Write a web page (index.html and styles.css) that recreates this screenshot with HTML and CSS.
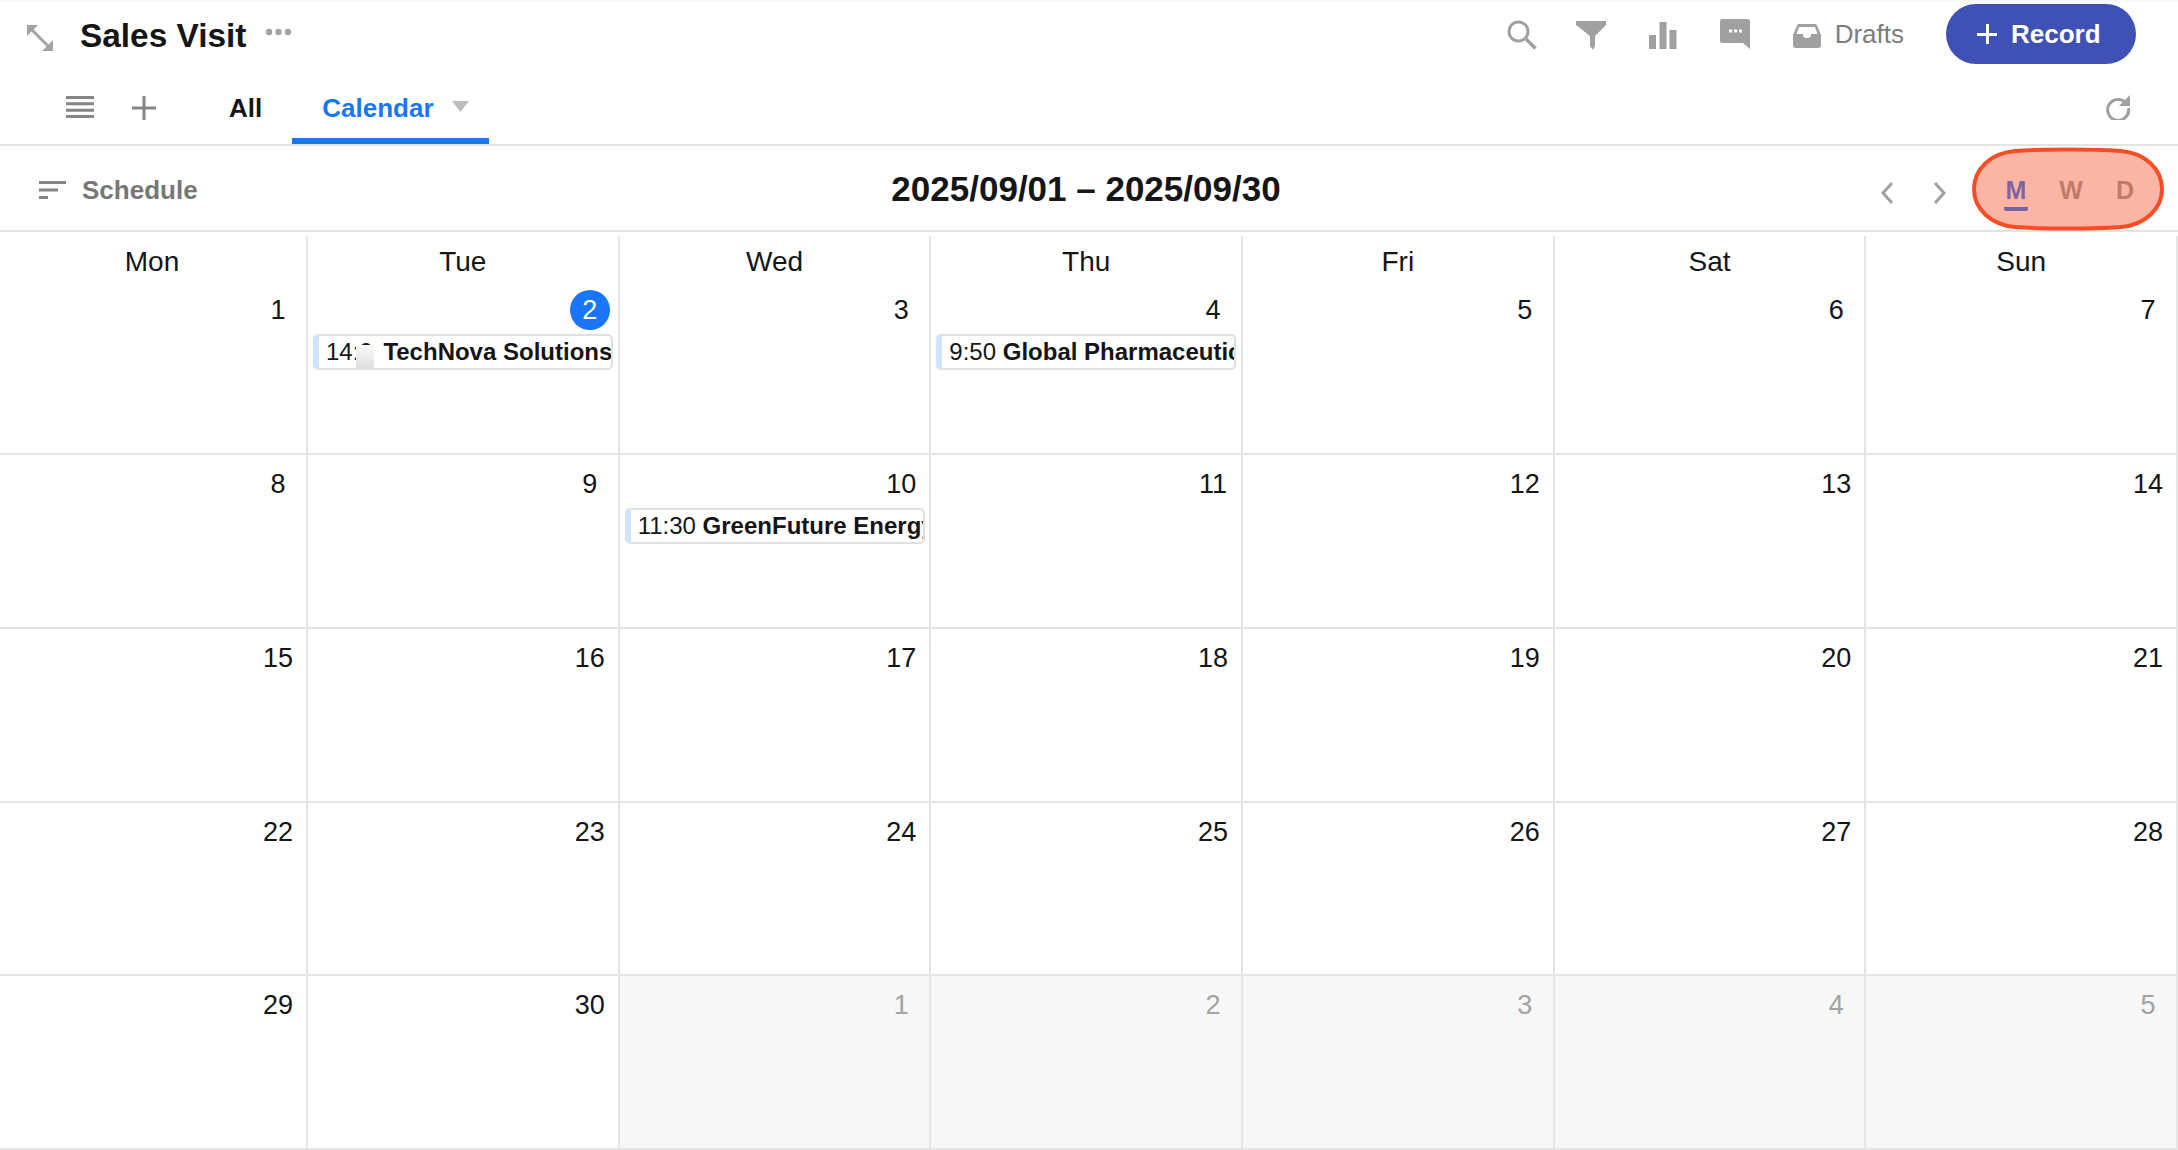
FILE: index.html
```html
<!DOCTYPE html>
<html lang="en">
<head>
<meta charset="utf-8">
<title>Sales Visit</title>
<link rel="stylesheet" href="styles.css">
</head>
<body>
<div class="app">
  <header class="topbar">
    <svg class="ic-expand" width="26" height="26" viewBox="0 0 26 26"><path d="M0 0h11L0 11zM26 26H15l11-11z" fill="#a3a3a3"/><path d="M4 4l18 18" stroke="#a3a3a3" stroke-width="3"/></svg>
    <h1 class="title">Sales Visit</h1>
    <svg class="ic-dots" width="27" height="8" viewBox="0 0 27 8"><circle cx="4" cy="4" r="3.2" fill="#a3a3a3"/><circle cx="13.5" cy="4" r="3.2" fill="#a3a3a3"/><circle cx="23" cy="4" r="3.2" fill="#a3a3a3"/></svg>
    <div class="top-actions">
      <svg class="ic-search" width="30" height="30" viewBox="0 0 30 30"><circle cx="11.5" cy="11.5" r="9.5" fill="none" stroke="#a0a0a0" stroke-width="3"/><path d="M18.5 18.5L28.5 28.5" stroke="#a0a0a0" stroke-width="3.4"/></svg>
      <svg class="ic-funnel" width="32" height="29" viewBox="0 0 32 29"><path d="M1 0h30v4L20 15v10l-2 4-3-4V15L1 4z" fill="#a0a0a0"/></svg>
      <svg class="ic-bars" width="28" height="27" viewBox="0 0 28 27"><path d="M0 13h7v14H0zM10.500 0h7v27h-7zM20.500 8h7v19h-7z" fill="#a0a0a0"/></svg>
      <svg class="ic-chat" width="30" height="30" viewBox="0 0 30 30"><path d="M2 0h26a2 2 0 0 1 2 2v28l-7-6H2a2 2 0 0 1-2-2V2a2 2 0 0 1 2-2z" fill="#a0a0a0"/><path d="M9 10.500h3v3H9zM14 10.500h3v3h-3zM19 10.500h3v3h-3z" fill="#fff"/></svg>
      <svg class="ic-inbox" width="28" height="24" viewBox="0 0 28 24"><path d="M6 0h16a2 2 0 0 1 2 1.500L28 11v10a3 3 0 0 1-3 3H3a3 3 0 0 1-3-3V11l4-9.500A2 2 0 0 1 6 0z" fill="#a0a0a0"/><path d="M6 3h16l2.500 7H18v2l-2 2h-4l-2-2v-2H3.500z" fill="#fff"/></svg>
      <span class="drafts">Drafts</span>
      <button class="record"><span class="record-plus"></span>Record</button>
    </div>
  </header>

  <nav class="tabs">
    <svg class="ic-list" width="28" height="22" viewBox="0 0 28 22"><path d="M0 0h28v3H0zM0 6.300h28v3H0zM0 12.700h28v3H0zM0 19h28v3H0z" fill="#858585"/></svg>
    <svg class="ic-plus" width="24" height="24" viewBox="0 0 24 24"><path d="M10.500 0h3v24h-3zM0 10.500h24v3H0z" fill="#858585"/></svg>
    <span class="tab-all">All</span>
    <div class="tab-cal">
      <span class="tab-cal-label">Calendar</span>
      <svg class="ic-caret" width="17" height="11" viewBox="0 0 17 11"><path d="M0 0h17l-8.500 11z" fill="#bdbdbd"/></svg>
    </div>
    <svg class="ic-refresh" width="26" height="26" viewBox="0 0 26 26"><path d="M21.500 9.500A10.500 10.500 0 1 0 23.500 14" fill="none" stroke="#a0a0a0" stroke-width="3"/><path d="M25 1v11H14z" fill="#a0a0a0"/></svg>
  </nav>

  <section class="toolbar">
    <div class="schedule">
      <svg width="27" height="18" viewBox="0 0 27 18"><path d="M0 0h27v3H0zM0 7.500h19v3H0zM0 15h9v3H0z" fill="#858585"/></svg>
      <span>Schedule</span>
    </div>
    <div class="range">2025/09/01 – 2025/09/30</div>
    <div class="nav-btns">
      <svg width="14" height="24" viewBox="0 0 14 24"><path d="M12 2L3 12l9 10" fill="none" stroke="#a0a0a0" stroke-width="3"/></svg>
      <svg width="14" height="24" viewBox="0 0 14 24"><path d="M2 2l9 10-9 10" fill="none" stroke="#a0a0a0" stroke-width="3"/></svg>
    </div>
    <div class="modes">
      <span class="mode active">M</span>
      <span class="mode">W</span>
      <span class="mode">D</span>
    </div>
    <svg class="highlight" width="194" height="84" viewBox="0 0 194 84"><path d="M44 4C72 2 122 2 150 4C174 6 191 22 191 42C191 62 174 78 150 80C122 82 72 82 44 80C20 78 3 62 3 42C3 22 20 6 44 4z" fill="rgba(247,78,40,.418)" stroke="#f54e26" stroke-width="4"/></svg>
  </section>

  <div class="weekdays">
    <div>Mon</div><div>Tue</div><div>Wed</div><div>Thu</div><div>Fri</div><div>Sat</div><div>Sun</div>
  </div>
  <div class="month">
    <div class="cell first"><span class="num">1</span></div>
    <div class="cell first"><span class="num today">2</span>
      <div class="event"><span class="ev-time short">14:0</span> <b>TechNova Solutions</b><span class="smudge"></span></div></div>
    <div class="cell first"><span class="num">3</span></div>
    <div class="cell first"><span class="num">4</span>
      <div class="event"><span class="ev-time">9:50</span> <b>Global Pharmaceuticals</b></div></div>
    <div class="cell first"><span class="num">5</span></div>
    <div class="cell first"><span class="num">6</span></div>
    <div class="cell first"><span class="num">7</span></div>

    <div class="cell"><span class="num">8</span></div>
    <div class="cell"><span class="num">9</span></div>
    <div class="cell"><span class="num">10</span>
      <div class="event"><span class="ev-time">11:30</span> <b>GreenFuture Energy</b></div></div>
    <div class="cell"><span class="num">11</span></div>
    <div class="cell"><span class="num">12</span></div>
    <div class="cell"><span class="num">13</span></div>
    <div class="cell"><span class="num">14</span></div>

    <div class="cell"><span class="num">15</span></div>
    <div class="cell"><span class="num">16</span></div>
    <div class="cell"><span class="num">17</span></div>
    <div class="cell"><span class="num">18</span></div>
    <div class="cell"><span class="num">19</span></div>
    <div class="cell"><span class="num">20</span></div>
    <div class="cell"><span class="num">21</span></div>

    <div class="cell"><span class="num">22</span></div>
    <div class="cell"><span class="num">23</span></div>
    <div class="cell"><span class="num">24</span></div>
    <div class="cell"><span class="num">25</span></div>
    <div class="cell"><span class="num">26</span></div>
    <div class="cell"><span class="num">27</span></div>
    <div class="cell"><span class="num">28</span></div>

    <div class="cell"><span class="num">29</span></div>
    <div class="cell"><span class="num">30</span></div>
    <div class="cell off"><span class="num">1</span></div>
    <div class="cell off"><span class="num">2</span></div>
    <div class="cell off"><span class="num">3</span></div>
    <div class="cell off"><span class="num">4</span></div>
    <div class="cell off"><span class="num">5</span></div>
  </div>
</div>
</body>
</html>
```

FILE: styles.css
```css
* { box-sizing: border-box; }
html, body { margin: 0; padding: 0; background: #fff; }
body {
  font-family: "Liberation Sans", Arial, sans-serif;
  color: #151515;
  width: 2178px;
  height: 1150px;
  overflow: hidden;
}
svg { display: block; flex: none; }
.app { width: 2178px; height: 1150px; border-top: 2px solid #f7f7f7; }

/* top bar */
.topbar { height: 68px; display: flex; align-items: center; position: relative; }
.ic-expand { margin-left: 27px; margin-top: 4px; }
.title { margin: 0 0 0 27px; font-size: 33.4px; font-weight: 700; line-height: 40px; }
.ic-dots { margin-left: 19px; margin-bottom: 8px; }
.top-actions { margin-left: auto; display: flex; align-items: center; height: 60px; margin-right: 42px; margin-top: -4px; }
.ic-search { margin-right: 38px; margin-top: 2px; }
.ic-funnel { margin-right: 42px; margin-top: 2px; }
.ic-bars { margin-right: 43px; margin-top: 2px; }
.ic-chat { margin-right: 43px; }
.ic-inbox { margin-right: 14px; margin-top: 4px; }
.drafts { color: #7c7c7c; font-size: 26px; margin-right: 42px; }
.record {
  width: 190px; height: 60px; border: 0; border-radius: 30px; background: #3f51b5; color: #fff;
  font: 700 26px "Liberation Sans", Arial, sans-serif;
  display: flex; align-items: center; padding: 0 0 0 31px; gap: 14px;
}
.record-plus {
  width: 20px; height: 20px; flex: none;
  background:
    linear-gradient(#fff, #fff) center / 3px 100% no-repeat,
    linear-gradient(#fff, #fff) center / 100% 3px no-repeat;
}

/* tabs */
.tabs { height: 76px; display: flex; align-items: center; border-bottom: 2px solid #e3e3e3; position: relative; }
.ic-list { margin-left: 66px; }
.ic-plus { margin-left: 38px; margin-top: 1px; }
.tab-all { margin-left: 73px; font-size: 26px; font-weight: 700; margin-top: 2px; }
.tab-cal {
  margin-left: 30px; width: 197px; height: 74px; display: flex; align-items: center; padding-left: 30px;
  border-bottom: 6px solid #1a76f8; padding-top: 9px;
}
.tab-cal-label { color: #1a76f8; font-size: 26px; font-weight: 700; }
.ic-caret { margin-left: 18px; margin-top: -4px; }
.ic-refresh { margin-left: auto; margin-right: 47px; }

/* toolbar */
.toolbar { height: 86px; display: grid; grid-template-columns: 1fr auto 1fr; align-items: center; position: relative; border-bottom: 2px solid #e3e3e3; }
.schedule { display: flex; align-items: center; gap: 16px; padding-left: 39px; color: #777; font-size: 26px; font-weight: 700; padding-top: 4px; }
.range { font-size: 35px; font-weight: 700; margin-left: -6px; padding-top: 1px; }
.nav-btns { position: absolute; left: 1880px; top: 35px; display: flex; gap: 39px; }
.modes { position: absolute; left: 2004px; top: 23px; display: flex; height: 42px; }
.mode { color: #999; font-size: 25px; font-weight: 700; width: 24px; text-align: center; margin-right: 31px; padding-top: 7px; }
.mode:nth-child(2) { margin-right: 30px; }
.mode.active { color: #1a76f8; border-bottom: 4px solid #1a76f8; border-radius: 0 0 2px 2px; }
.highlight { position: absolute; left: 1971px; top: 1px; }

/* calendar */
.weekdays { display: grid; grid-template-columns: 308px repeat(6, 1fr); height: 46px; padding-top: 4px; }
.weekdays > div { font-size: 28px; text-align: center; padding-top: 5px; line-height: 42px; border-right: 2px solid #e5e5e5; }
.weekdays > div:first-child { padding-right: 2px; }
.month { display: grid; grid-template-columns: 308px repeat(6, 1fr); grid-template-rows: 177px repeat(4, 173.75px); }
.cell { border-right: 2px solid #e5e5e5; border-bottom: 2px solid #e5e5e5; padding: 9px 8px 0 5px; position: relative; min-width: 0; display: flex; flex-direction: column; align-items: stretch; }
.cell.first { padding-top: 12px; }
.num { align-self: flex-end; width: 40px; text-align: center; font-size: 27px; line-height: 40px; height: 40px; }
.cell.off { background: #f7f7f7; }
.cell.off .num { color: #a3a3a3; }
.num.today { background: #1a76f8; color: #fff; border-radius: 50%; }
.event {
  position: relative; margin-top: 4px; height: 36px; width: 300px; border: 2px solid #e0e0e0; border-left: 6px solid #cfe5fb;
  border-radius: 5px; padding-left: 7px; font-size: 24px; line-height: 31px; white-space: nowrap; overflow: hidden;
  background: #fff;
}
.event b { font-weight: 700; }
.ev-time.short { margin-right: 4px; }
.smudge { position: absolute; left: 37px; top: 9px; width: 18px; height: 24px; background: linear-gradient(#fafafa, #dedede); }
```
